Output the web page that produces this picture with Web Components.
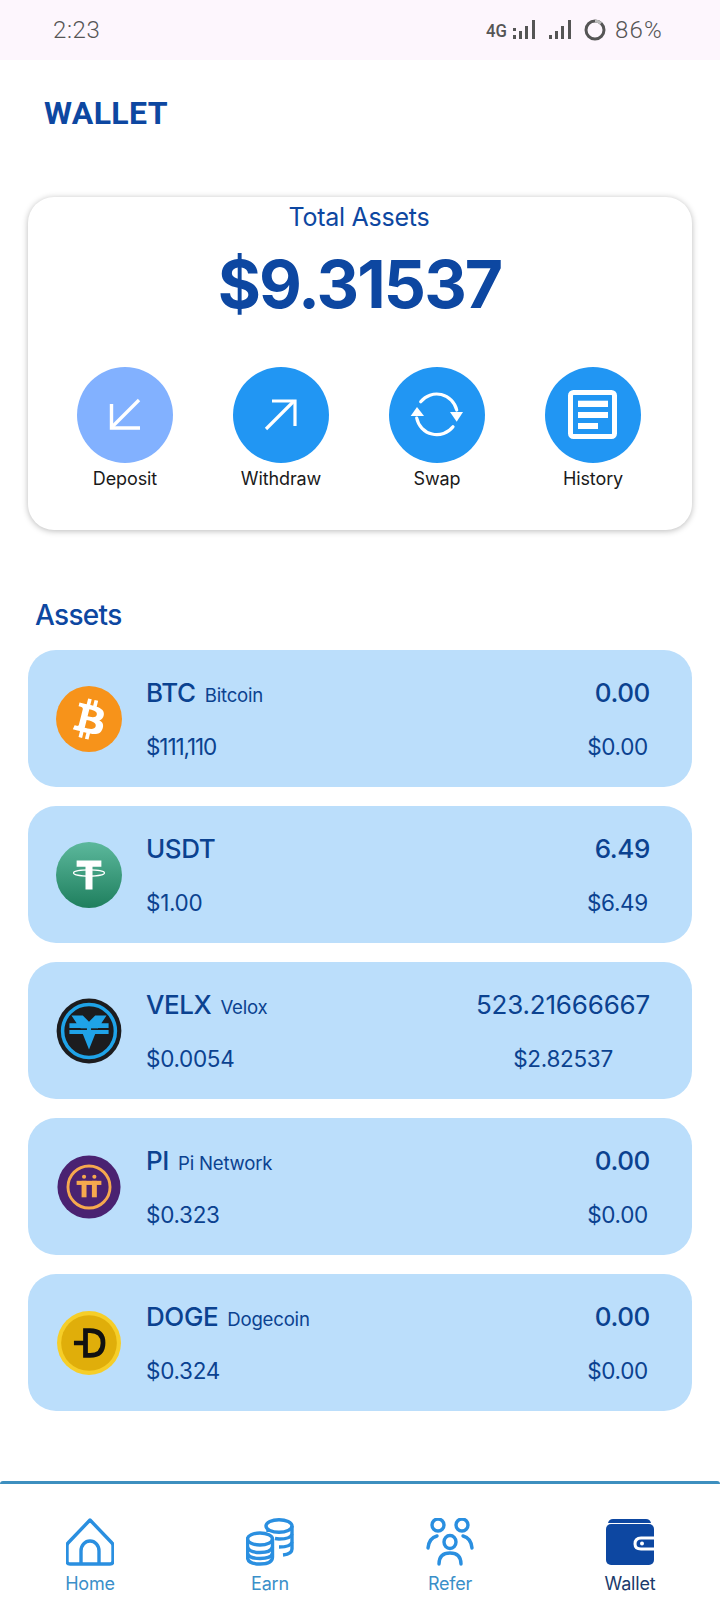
<!DOCTYPE html>
<html>
<head>
<meta charset="utf-8">
<title>Wallet</title>
<style>
  html, body { margin: 0; padding: 0; background: #fff; }
  body { font-family: Inter, "Liberation Sans", sans-serif; width: 720px; height: 1612px; overflow: hidden; }
</style>
</head>
<body>
<status-bar></status-bar>
<page-title>WALLET</page-title>
<wallet-card amount="$9.31537">
  <action-button label="Deposit" color="#82b1ff">
    <svg viewBox="0 0 40 40" width="40" height="40" fill="none" stroke="#fff" stroke-width="3.4"><path d="M34 5 L7 32"/><path d="M6.500 9 V33 H35"/></svg>
  </action-button>
  <action-button label="Withdraw">
    <svg viewBox="0 0 40 40" width="40" height="40" fill="none" stroke="#fff" stroke-width="3.2"><path d="M5 34 L33 6"/><path d="M11 6 H34 V31"/></svg>
  </action-button>
  <action-button label="Swap">
    <svg viewBox="0 0 56 56" width="56" height="56" fill="none" stroke="#fff" stroke-width="3.2" stroke-linecap="round"><path d="M11.700 14.700 A20.500 20.500 0 0 1 47.700 23"/><path d="M7.700 31 A20.500 20.500 0 0 0 44 39.700"/><path d="M41 25 H54 L47.700 34.700 Z" fill="#fff" stroke="none"/><path d="M1.700 29 H15 L8 20 Z" fill="#fff" stroke="none"/></svg>
  </action-button>
  <action-button label="History">
    <svg viewBox="0 0 56 56" width="56" height="56" fill="none"><rect x="5.500" y="5.500" width="44" height="44" rx="3" stroke="#fff" stroke-width="5"/><rect x="13" y="13.700" width="30" height="6.300" fill="#fff"/><rect x="13" y="25" width="30" height="6" fill="#fff"/><rect x="13" y="36" width="20" height="6" fill="#fff"/></svg>
  </action-button>
</wallet-card>
<section-title>Assets</section-title>
<asset-list>
  <asset-row symbol="BTC" name="Bitcoin" price="$111,110" amount="0.00" value="$0.00" strong tight>
    <coin-icon kind="btc"></coin-icon>
  </asset-row>
  <asset-row symbol="USDT" price="$1.00" amount="6.49" value="$6.49" strong>
    <coin-icon kind="usdt"></coin-icon>
  </asset-row>
  <asset-row symbol="VELX" name="Velox" price="$0.0054" amount="523.21666667" value="$2.82537" centered>
    <coin-icon kind="velx"></coin-icon>
  </asset-row>
  <asset-row symbol="PI" name="Pi Network" price="$0.323" amount="0.00" value="$0.00" strong>
    <coin-icon kind="pi"></coin-icon>
  </asset-row>
  <asset-row symbol="DOGE" name="Dogecoin" price="$0.324" amount="0.00" value="$0.00" strong>
    <coin-icon kind="doge"></coin-icon>
  </asset-row>
</asset-list>
<bottom-nav>
  <nav-item label="Home">
    <svg viewBox="0 0 48 48" width="48" height="48" fill="none" stroke="#2a8fe0" stroke-width="3.4" stroke-linejoin="round"><path d="M24 2 L46 25 Q47 26 47 28 V43 Q47 46 44 46 H4 Q1 46 1 43 V28 Q1 26 2 25 Z"/><path d="M15 46 V33 A9 10 0 0 1 33 33 V46"/></svg>
  </nav-item>
  <nav-item label="Earn">
    <svg viewBox="0 0 48 48" width="48" height="48" fill="none" stroke="#2a8fe0" stroke-width="3.4"><ellipse cx="33" cy="8" rx="13" ry="6.300"/><path d="M46 8 V31 Q46 36 37 37"/><path d="M22 11 V14"/><path d="M46 16 Q45 21 33 21 L29 20.500"/><path d="M46 24 Q45 29 33 29"/><ellipse cx="14" cy="21" rx="12.500" ry="6"/><path d="M1.500 21 V39 Q1.500 46 14 46 Q26.500 46 26.500 39 V21"/><path d="M1.500 29 Q3 34.500 14 34.500 Q25 34.500 26.500 29"/><path d="M1.500 36 Q3 41 14 41 Q25 41 26.500 36" transform="translate(0 -.5)"/></svg>
  </nav-item>
  <nav-item label="Refer">
    <svg viewBox="0 0 48 48" width="48" height="48" fill="none" stroke="#2a8fe0" stroke-width="3.4" stroke-linecap="round"><ellipse cx="12" cy="7" rx="6" ry="6"/><ellipse cx="36" cy="7" rx="6" ry="6"/><ellipse cx="24" cy="24" rx="6" ry="6.500"/><path d="M2 30 Q3 20 11 18"/><path d="M46 30 Q45 20 37 18"/><path d="M13 46 Q13 35 24 35 Q35 35 35 46"/></svg>
  </nav-item>
  <nav-item label="Wallet" active>
    <svg viewBox="0 0 48 48" width="48" height="48"><path d="M2 5 Q3 1 7 1 H40 Q44 1 45 5 Z" fill="#0d47a1"/><rect x="0" y="6" width="48" height="41" rx="5" fill="#0d47a1"/><path d="M48 20 H35 Q29 20 29 26 Q29 31 35 31 H48" fill="#0d47a1" stroke="#fff" stroke-width="3"/><circle cx="36" cy="25.500" r="2" fill="#fff"/></svg>
  </nav-item>
</bottom-nav>

<script>
class StatusBar extends HTMLElement {
  constructor() {
    super();
    this.attachShadow({ mode: "open" }).innerHTML = `
      <style>
        :host { display: flex; align-items: center; height: 60px; padding: 0 57px 0 53px; background: #fdf6fd;
          color: #555; font: 300 24px Roboto, sans-serif; letter-spacing: .6px; }
        .right { margin-left: auto; display: flex; align-items: center; }
        .net { font-size: 19px; font-weight: 500; letter-spacing: 0; display: inline-block; transform: scaleX(.88); transform-origin: left; width: 27px; }
        svg { display: block; }
        .sig2 { margin-left: 14px; }
        .ring { margin-left: 13px; }
        .pct { margin-left: 9px; letter-spacing: 1.2px; }
      </style>
      <span>2:23</span>
      <div class="right">
        <span class="net">4G</span>
        <svg width="22" height="20" viewBox="0 0 22 20" fill="#555"><rect x="0" y="8" width="3" height="3"/><rect x="0" y="15" width="3" height="4"/><rect x="6" y="11" width="3" height="8"/><rect x="12" y="6" width="3" height="13"/><rect x="19" y="0" width="3" height="19"/></svg>
        <svg class="sig2" width="22" height="20" viewBox="0 0 22 20" fill="#555"><rect x="0" y="15" width="3" height="4"/><rect x="6" y="11" width="3" height="8"/><rect x="12" y="6" width="3" height="13"/><rect x="19" y="0" width="3" height="19"/></svg>
        <svg class="ring" width="22" height="22" viewBox="0 0 22 22" fill="none" stroke-width="3"><circle cx="11" cy="11" r="9" stroke="#555"/><path d="M11 2 A9 9 0 0 1 17 4.300" stroke="#bbb"/></svg>
        <span class="pct">86%</span>
      </div>`;
  }
}
customElements.define("status-bar", StatusBar);

class PageTitle extends HTMLElement {
  constructor() {
    super();
    this.attachShadow({ mode: "open" }).innerHTML = `
      <style>
        :host { display: block; padding: 35px 0 66px 44px; font: 700 32px/36px Roboto, sans-serif; color: #0d47a1; letter-spacing: .4px; }
      </style>
      <slot></slot>`;
  }
}
customElements.define("page-title", PageTitle);

const cardTemplate = document.createElement("template");
cardTemplate.innerHTML = `
  <style>
    :host { display: block; margin: 0 28px; padding: 4px 0 39px; background: #fff; border-radius: 26px;
      box-shadow: 0 1px 6px rgba(0, 0, 0, .28); text-align: center; }
    .label { font: 400 25px/32px Inter, sans-serif; color: #0d47a1; letter-spacing: -.25px; padding-right: 2px; }
    .amount { margin-top: 11px; font: 700 66px/80px Inter, sans-serif; color: #0d47a1; letter-spacing: -1.9px; padding-right: 1px; }
    .actions { display: grid; grid-template-columns: repeat(4, 156px); justify-content: center; margin-top: 43px; padding-right: 2px; }
  </style>
  <div class="label">Total Assets</div>
  <div class="amount"></div>
  <div class="actions"><slot></slot></div>
`;

class WalletCard extends HTMLElement {
  constructor() {
    super();
    this.attachShadow({ mode: "open" });
    this.shadowRoot.appendChild(cardTemplate.content.cloneNode(true));
  }

  connectedCallback() {
    this.shadowRoot.querySelector(".amount").textContent = this.getAttribute("amount");
  }
}
customElements.define("wallet-card", WalletCard);

class ActionButton extends HTMLElement {
  constructor() {
    super();
    this.attachShadow({ mode: "open" }).innerHTML = `
      <style>
        :host { display: flex; flex-direction: column; align-items: center; }
        .circle { width: 96px; height: 96px; border-radius: 50%; display: flex; align-items: center; justify-content: center; background: var(--c, #2196f3); }
        .text { margin-top: 4px; font: 400 18px/24px Inter, sans-serif; color: #1a1a1a; letter-spacing: -.1px; }
      </style>
      <div class="circle"><slot></slot></div>
      <div class="text"></div>`;
  }

  connectedCallback() {
    this.shadowRoot.querySelector(".text").textContent = this.getAttribute("label");
    if (this.hasAttribute("color")) this.style.setProperty("--c", this.getAttribute("color"));
  }
}
customElements.define("action-button", ActionButton);

class SectionTitle extends HTMLElement {
  constructor() {
    super();
    this.attachShadow({ mode: "open" }).innerHTML = `
      <style>
        :host { display: block; padding: 67px 0 17px 35px; font: 500 28px/36px Inter, sans-serif; color: #0d47a1; letter-spacing: -.7px; }
      </style>
      <slot></slot>`;
  }
}
customElements.define("section-title", SectionTitle);

class AssetList extends HTMLElement {
  constructor() {
    super();
    this.attachShadow({ mode: "open" }).innerHTML = `
      <style>
        :host { display: flex; flex-direction: column; gap: 19px; margin: 0 28px; }
      </style>
      <slot></slot>`;
  }
}
customElements.define("asset-list", AssetList);

const rowTemplate = document.createElement("template");
rowTemplate.innerHTML = `
  <style>
    :host { display: flex; align-items: center; height: 137px; box-sizing: border-box; padding: 0 42px 0 28px;
      background: #bbdefb; border-radius: 28px; color: #0b4290; }
    .info { margin-left: 24px; padding-top: 2px; }
    .right { margin-left: auto; padding-top: 2px; display: flex; flex-direction: column; align-items: flex-end; }
    :host([centered]) .right { align-items: center; }
    :host([strong]) .val { margin-right: 2px; }
    .line1 { display: flex; align-items: baseline; height: 32px; line-height: 32px; }
    .line2 { margin-top: 22px; height: 32px; font: 400 22.5px/32px Inter, sans-serif; letter-spacing: -.3px; }
    :host([tight]) .price { letter-spacing: -1.1px; }
    .sym { font: 500 26px/32px Inter, sans-serif; letter-spacing: -.4px; }
    .name { margin-left: 9px; font: 400 18.6px/32px Inter, sans-serif; letter-spacing: -.2px; }
    .amt { font: 400 26px/32px Inter, sans-serif; letter-spacing: -.2px; }
    :host([strong]) .amt { font-weight: 500; letter-spacing: -.4px; }
  </style>
  <slot></slot>
  <div class="info">
    <div class="line1"><span class="sym"></span><span class="name"></span></div>
    <div class="line2 price"></div>
  </div>
  <div class="right">
    <div class="line1"><span class="amt"></span></div>
    <div class="line2 val"></div>
  </div>
`;

class AssetRow extends HTMLElement {
  constructor() {
    super();
    this.attachShadow({ mode: "open" });
    this.shadowRoot.appendChild(rowTemplate.content.cloneNode(true));
  }

  connectedCallback() {
    const root = this.shadowRoot;
    root.querySelector(".sym").textContent = this.getAttribute("symbol");
    root.querySelector(".name").textContent = this.getAttribute("name") || "";
    root.querySelector(".price").textContent = this.getAttribute("price");
    root.querySelector(".amt").textContent = this.getAttribute("amount");
    root.querySelector(".val").textContent = this.getAttribute("value");
  }
}
customElements.define("asset-row", AssetRow);

const COINS = {
  btc: `<circle cx="16" cy="16" r="16" fill="#f7931a"/><path fill="#fff" d="M23.189 14.02c.314-2.096-1.283-3.223-3.465-3.975l.708-2.84-1.728-.43-.69 2.765c-.454-.114-.92-.22-1.385-.326l.695-2.783L15.596 6l-.708 2.839c-.376-.086-.746-.17-1.104-.26l.002-.009-2.384-.595-.46 1.846s1.283.294 1.256.312c.7.175.826.638.805 1.006l-.806 3.235c.048.012.11.03.18.057l-.183-.045-1.13 4.532c-.086.212-.303.531-.793.41.018.025-1.256-.313-1.256-.313l-.858 1.978 2.25.561c.418.105.828.215 1.231.318l-.715 2.872 1.727.43.708-2.84c.472.127.93.245 1.378.357l-.706 2.828 1.728.43.715-2.866c2.948.558 5.164.333 6.097-2.333.752-2.146-.037-3.385-1.588-4.192 1.13-.26 1.98-1.003 2.207-2.538zm-3.95 5.538c-.533 2.147-4.148.986-5.32.695l.95-3.805c1.172.293 4.929.872 4.37 3.11zm.535-5.569c-.487 1.953-3.495.96-4.47.717l.86-3.45c.975.243 4.118.696 3.61 2.733z"/>`,
  usdt: `<defs><linearGradient id="g" x1="0" y1="0" x2="0" y2="1"><stop offset="0" stop-color="#5cb89c"/><stop offset="1" stop-color="#1f7f5e"/></linearGradient></defs><circle cx="16" cy="16" r="16" fill="url(#g)"/><path fill="#fff" d="M10 9 H22 V12 H17.700 V23 H14.300 V12 H10 Z"/><ellipse cx="16" cy="15" rx="7.500" ry="1.500" fill="none" stroke="#fff" stroke-width=".6"/>`,
  velx: `<circle cx="16" cy="16" r="15.700" fill="#1c1c1e"/><circle cx="16" cy="16" r="12.800" fill="none" stroke="#1fa3e8" stroke-width="1.700"/><path fill="#1fa3e8" d="M7.500 8.500 H13 L16 11.500 L19 8.500 H24.500 L22 12.300 H25.500 V14.500 H20.300 L19.500 15.500 H25.500 V17.500 H19 L16 25 L13 17.500 H6.500 V15.500 H12.500 L11.700 14.500 H6.500 V12.300 H10 Z"/><rect x="9" y="14.700" width="6" height=".8" fill="#1c1c1e"/><rect x="17" y="14.700" width="3" height=".8" fill="#1c1c1e"/>`,
  pi: `<circle cx="16" cy="16" r="15.300" fill="#4a2271"/><circle cx="16" cy="16" r="10.200" fill="none" stroke="#f6a94e" stroke-width="1.400"/><g fill="#f6a94e"><rect x="10" y="13" width="12" height="2"/><rect x="12.400" y="13" width="2.400" height="8"/><rect x="17.400" y="13" width="2.400" height="8"/><circle cx="13.600" cy="11" r="1"/><circle cx="18.600" cy="11" r="1"/></g>`,
  doge: `<circle cx="16" cy="16" r="15.500" fill="#f6ce28"/><circle cx="16" cy="16" r="13.500" fill="#e0ae0a"/><path d="M14.300 10 H16.500 C21.500 10 22.800 13 22.800 16 C22.800 19 21.500 22 16.500 22 H14.300 Z M8.700 16 H15" fill="none" stroke="#111" stroke-width="2.300"/>`
};

class CoinIcon extends HTMLElement {
  constructor() {
    super();
    this.attachShadow({ mode: "open" });
  }

  connectedCallback() {
    this.shadowRoot.innerHTML = `
      <style>
        :host { display: block; width: 66px; height: 66px; flex: none; }
        svg { display: block; width: 100%; height: 100%; }
      </style>
      <svg viewBox="0 0 32 32">${COINS[this.getAttribute("kind")]}</svg>`;
  }
}
customElements.define("coin-icon", CoinIcon);

class BottomNav extends HTMLElement {
  constructor() {
    super();
    this.attachShadow({ mode: "open" }).innerHTML = `
      <style>
        :host { display: grid; grid-template-columns: repeat(4, 180px); margin-top: 70px; height: 131px; box-sizing: border-box;
          padding-top: 34px; border-top: 3px solid #3d8fbf; border-radius: 3px 3px 0 0; }
      </style>
      <slot></slot>`;
  }
}
customElements.define("bottom-nav", BottomNav);

class NavItem extends HTMLElement {
  constructor() {
    super();
    this.attachShadow({ mode: "open" }).innerHTML = `
      <style>
        :host { display: flex; flex-direction: column; align-items: center; color: #3a8fc9; }
        :host([active]) { color: #1b3a6b; }
        .text { margin-top: 6px; font: 400 18px/24px Inter, sans-serif; letter-spacing: -.2px; }
        ::slotted(svg) { display: block; }
      </style>
      <slot></slot>
      <div class="text"></div>`;
  }

  connectedCallback() {
    this.shadowRoot.querySelector(".text").textContent = this.getAttribute("label");
  }
}
customElements.define("nav-item", NavItem);
</script>
</body>
</html>
